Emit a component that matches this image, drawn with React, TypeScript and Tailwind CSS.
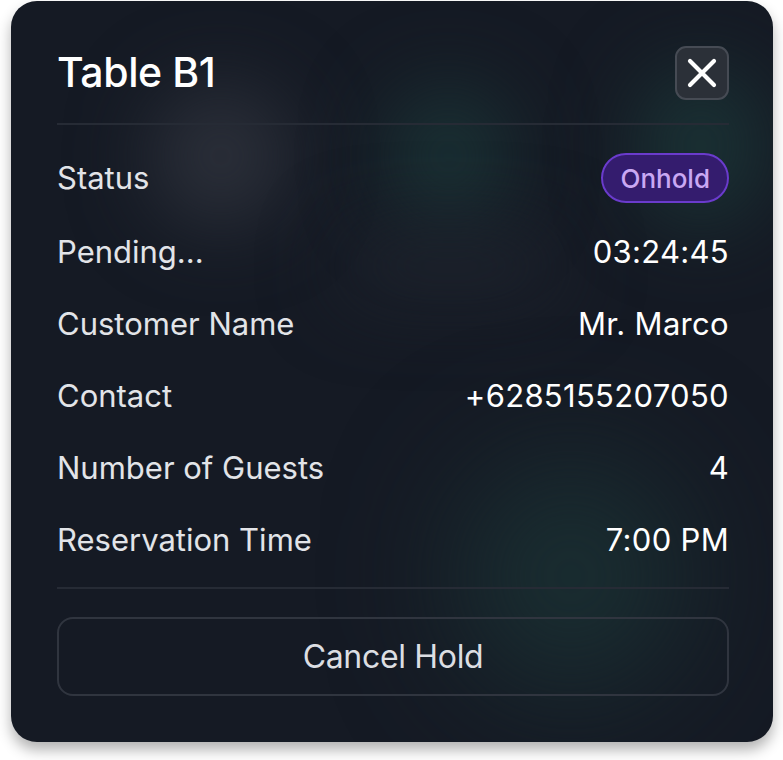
import React from 'react';

const rows = [
  { label: 'Pending...', value: '03:24:45' },
  { label: 'Customer Name', value: 'Mr. Marco' },
  { label: 'Contact', value: '+6285155207050' },
  { label: 'Number of Guests', value: '4' },
  { label: 'Reservation Time', value: '7:00 PM' },
];

export default function App() {
  return (
    <div className="w-[783px] h-[760px] bg-white pt-px pl-[11px] font-['Inter',sans-serif]">
      <div className="relative w-[762px] h-[741px] rounded-[26px] bg-[#151a24] overflow-hidden shadow-[0_8px_14px_rgba(0,0,0,0.3)]">
        {/* background glows */}
        <div className="absolute left-[140px] top-[85px] w-[140px] h-[140px] rounded-full bg-[#2c303a] blur-2xl" />
        <div className="absolute left-[375px] top-[85px] w-[125px] h-[140px] rounded-full bg-[#1a3134] blur-2xl" />
        <div className="absolute left-[625px] top-[65px] w-[130px] h-[160px] rounded-full bg-[#1a3134] blur-2xl" />
        <div className="absolute left-[330px] top-[235px] w-[220px] h-[60px] rounded-full bg-[#1e232d] blur-2xl" />
        <div className="absolute left-[450px] top-[460px] w-[220px] h-[230px] rounded-full bg-[#1a2f32] blur-3xl" />

        <div className="relative flex flex-col pl-[46px] pr-[44px] pt-[45px]">
          <div className="flex items-center justify-between h-[54px]">
            <h1 className="text-[41px] font-medium text-white tracking-[-0.01em]">Table B1</h1>
            <button className="w-[54px] h-[54px] rounded-[11px] bg-[#2b3038] border-2 border-[#464b54] flex items-center justify-center text-white">
              <svg width="30" height="30" viewBox="0 0 30 30" fill="none" stroke="currentColor" strokeWidth="4.2" strokeLinecap="round">
                <path d="M3 3L27 27M27 3L3 27" />
              </svg>
            </button>
          </div>

          <div className="mt-[23px] h-[2px] bg-[#262b35]" />

          <div className="mt-[28px] flex items-center justify-between h-[50px]">
            <span className="text-[31px] text-[#e2e4e8]">Status</span>
            <span className="h-[50px] px-[17px] rounded-full bg-[#341c6e] border-2 border-[#6a3bcc] flex items-center text-[26px] font-medium text-[#c9a8f3]">
              Onhold
            </span>
          </div>

          <div className="mt-[31px] flex flex-col gap-[36px]">
            {rows.map((r) => (
              <div key={r.label} className="flex items-center justify-between h-[36px]">
                <span className="text-[31px] text-[#e2e4e8]">{r.label}</span>
                <span className="text-[31px] text-white tracking-[0.01em]">{r.value}</span>
              </div>
            ))}
          </div>

          <div className="mt-[29px] h-[2px] bg-[#262b35]" />

          <button className="mt-[28px] h-[79px] rounded-[16px] border-2 border-[#30353f] flex items-center justify-center text-[32px] text-[#dcdee2] tracking-[-0.01em]">
            Cancel Hold
          </button>
        </div>
      </div>
    </div>
  );
}
